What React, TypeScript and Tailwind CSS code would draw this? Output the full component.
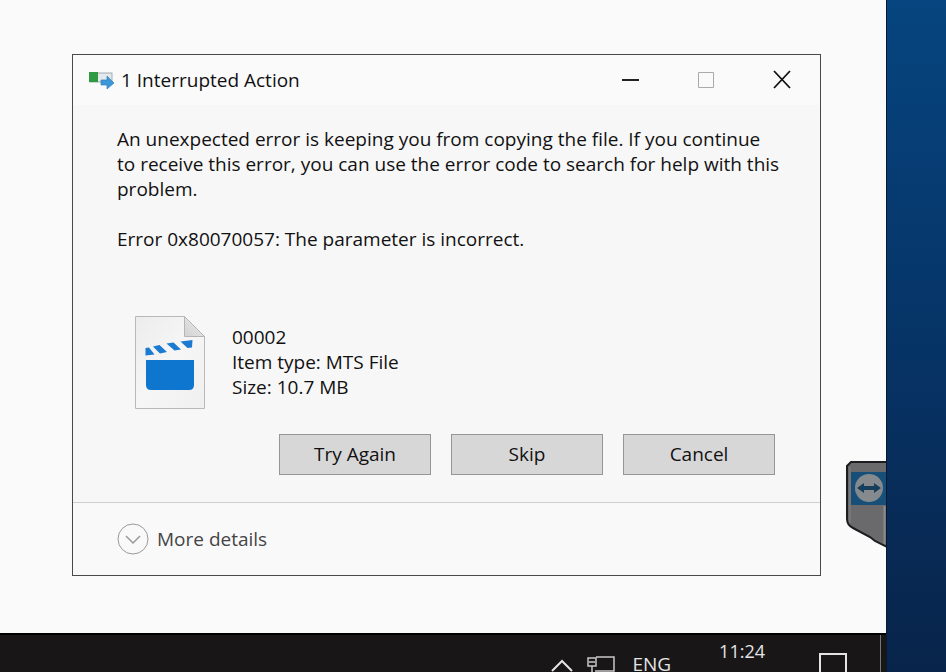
import type { ReactNode } from 'react'

function CopyIcon() {
  return (
    <svg width="26" height="20" viewBox="0 0 26 20" aria-hidden="true">
      <rect x="1" y="3" width="22" height="9" fill="#e3e9ec" stroke="#a3acb0" />
      <rect x="0" y="2" width="9" height="10" fill="#2f9a41" />
      <path d="M12 10h6V6l7 7-7 6v-4h-6z" fill="#3c97d6" stroke="#3482bb" strokeWidth="0.7" />
    </svg>
  )
}

function VideoFileIcon() {
  return (
    <svg width="71" height="95" viewBox="0 0 71 95" aria-hidden="true" className="shrink-0">
      <defs>
        <linearGradient id="paper" x1="0" y1="0" x2="1" y2="1">
          <stop offset="0" stopColor="#ececec" />
          <stop offset="0.5" stopColor="#f6f6f6" />
          <stop offset="1" stopColor="#efefef" />
        </linearGradient>
        <linearGradient id="fold" x1="0" y1="1" x2="1" y2="0">
          <stop offset="0" stopColor="#d2d2d2" />
          <stop offset="1" stopColor="#ededed" />
        </linearGradient>
      </defs>
      <path d="M.5 .5h49l20 20v72H.5z" fill="url(#paper)" stroke="#b9b9b9" />
      <path d="M49.500 .5v20h20z" fill="url(#fold)" stroke="#b5b5b5" />
      <path d="M11 44h48v25q0 5-5 5H16q-5 0-5-5z" fill="#0f76d0" />
      <path
        d="M10.500 32l3.500-.5 5.500 7-9 1zM18 30.500l6.500-1.500 7.500 7-7 1.500zM31.500 27.500l7-1 7.500 7-6.500 1zM45.500 25.500l12-1.500-.5 7.500-4.500 .5z"
        fill="#1b7bd0"
      />
    </svg>
  )
}

function WindowControl({ label, disabled, children }: { label: string; disabled?: boolean; children: ReactNode }) {
  return (
    <button
      type="button"
      aria-label={label}
      disabled={disabled}
      className="flex h-full w-[76px] items-center justify-center"
    >
      <svg width="20" height="20" viewBox="0 0 20 20" fill="none" aria-hidden="true">
        {children}
      </svg>
    </button>
  )
}

function DialogButton({ children }: { children: ReactNode }) {
  return (
    <button type="button" className="h-[41px] w-[152px] border border-[#969696] bg-[#d8d7d8] pb-px">
      {children}
    </button>
  )
}

function ErrorDialog() {
  return (
    <section
      role="dialog"
      aria-labelledby="dialog-title"
      className="border border-[#4a484b] bg-[#f8f7f8] text-[19px] leading-[25px] text-[#111]"
    >
      <header className="flex h-[50px] items-center bg-[#fbfafb] pl-4">
        <CopyIcon />
        <h1 id="dialog-title" className="ml-1.5 flex-1">1 Interrupted Action</h1>
        <WindowControl label="Minimize">
          <path d="M2 10h17" stroke="#222" strokeWidth="2" />
        </WindowControl>
        <WindowControl label="Maximize" disabled>
          <path d="M2.500 2.500h15v15h-15z" stroke="#aaa" />
        </WindowControl>
        <WindowControl label="Close">
          <path d="M2 1l16 17M18 1L2 18" stroke="#111" strokeWidth="1.800" />
        </WindowControl>
      </header>

      <div className="pt-[22px] pr-[45px] pb-[27px] pl-11">
        {/* The message runs a little wider than the button row */}
        <p className="-mr-8">
          An unexpected error is keeping you from copying the file. If you continue
          <br />
          to receive this error, you can use the error code to search for help with this
          <br />
          problem.
        </p>
        <p className="mt-[25px]">Error 0x80070057: The parameter is incorrect.</p>

        <div className="mt-16 ml-[18px] flex gap-[26px]">
          <VideoFileIcon />
          <div className="pt-[9px]">
            <p>00002</p>
            <p>Item type: MTS File</p>
            <p>Size: 10.7 MB</p>
          </div>
        </div>

        <div className="mt-[23px] flex justify-end gap-5">
          <DialogButton>Try Again</DialogButton>
          <DialogButton>Skip</DialogButton>
          <DialogButton>Cancel</DialogButton>
        </div>
      </div>

      <footer className="flex h-[73px] items-center border-t border-[#d0ced0] bg-[#faf9fa] px-11">
        <button type="button" className="flex items-center gap-2 text-[#444]">
          <svg width="32" height="32" viewBox="0 0 32 32" fill="none" stroke="#999" aria-hidden="true">
            <circle cx="16" cy="16" r="15" />
            <path d="M9 13l7 7 7-7" strokeWidth="1.500" />
          </svg>
          More details
        </button>
      </footer>
    </section>
  )
}

function RemoteTab() {
  return (
    <button type="button" aria-label="Remote session" className="absolute top-[461px] right-0">
      <svg width="40" height="88" viewBox="0 0 40 88" aria-hidden="true">
        <path d="M5 1h36v85l-12-6-5-4-17-9q-6-3-6-9V5z" fill="#6a696b" stroke="#1d1d20" strokeWidth="2" />
        <path d="M4 62V6" stroke="#858486" />
        <path d="M38.500 45v38" stroke="#8b8b8d" strokeWidth="2" />
        <rect x="5" y="11" width="35" height="33" fill="#174f78" />
        <circle cx="23" cy="27" r="14" fill="#858a8e" />
        <path d="M11 27l7-5v3h10v-3l7 5-7 5v-3H18v3z" fill="#173f5c" />
      </svg>
    </button>
  )
}

function Taskbar() {
  return (
    <footer className="flex h-[39px] shrink-0 items-start overflow-hidden border-t-2 border-black bg-[#181617] text-[19px] leading-4 text-[#e4e4e4]">
      <div className="ml-auto flex items-start">
        <button type="button" aria-label="Show hidden icons" className="mt-6">
          <svg width="24" height="13" viewBox="0 0 24 13" fill="none" stroke="#e4e4e4" strokeWidth="2" aria-hidden="true">
            <path d="M2 12l10-10 10 10" />
          </svg>
        </button>
        <button type="button" aria-label="Network" className="mt-5 ml-3">
          <svg width="30" height="17" viewBox="0 0 30 17" fill="none" stroke="#c9c9c9" strokeWidth="1.500" aria-hidden="true">
            <path d="M10 2h18v14H9" />
            <path d="M2 3h8v8H2zM3 7h6M6 11v6" />
          </svg>
        </button>
        <button type="button" className="mt-[21px] ml-4">ENG</button>
        <time className="mt-2 ml-12 text-[18px]">11:24</time>
        <button type="button" aria-label="Notifications" className="mt-[18px] ml-[54px]">
          <svg width="28" height="19" viewBox="0 0 28 19" fill="none" stroke="#e4e4e4" strokeWidth="2" aria-hidden="true">
            <path d="M1 20V1h26v19" />
          </svg>
        </button>
        <span className="mr-[5px] ml-[33px] h-10 w-px bg-[#777]" />
      </div>
    </footer>
  )
}

export default function App() {
  return (
    <div className="flex h-screen overflow-hidden font-['Open_Sans','Noto_Sans',sans-serif]">
      <div className="relative flex min-w-0 flex-1 flex-col">
        <main className="flex-1 bg-[#fafafa] pt-[54px] pr-[65px] pl-[72px]">
          <ErrorDialog />
        </main>
        <RemoteTab />
        <Taskbar />
      </div>
      <aside className="w-[60px] shrink-0 border-l border-[#06192e] bg-linear-to-b from-[#06457f] via-[#063467] to-[#08244a]" />
    </div>
  )
}
